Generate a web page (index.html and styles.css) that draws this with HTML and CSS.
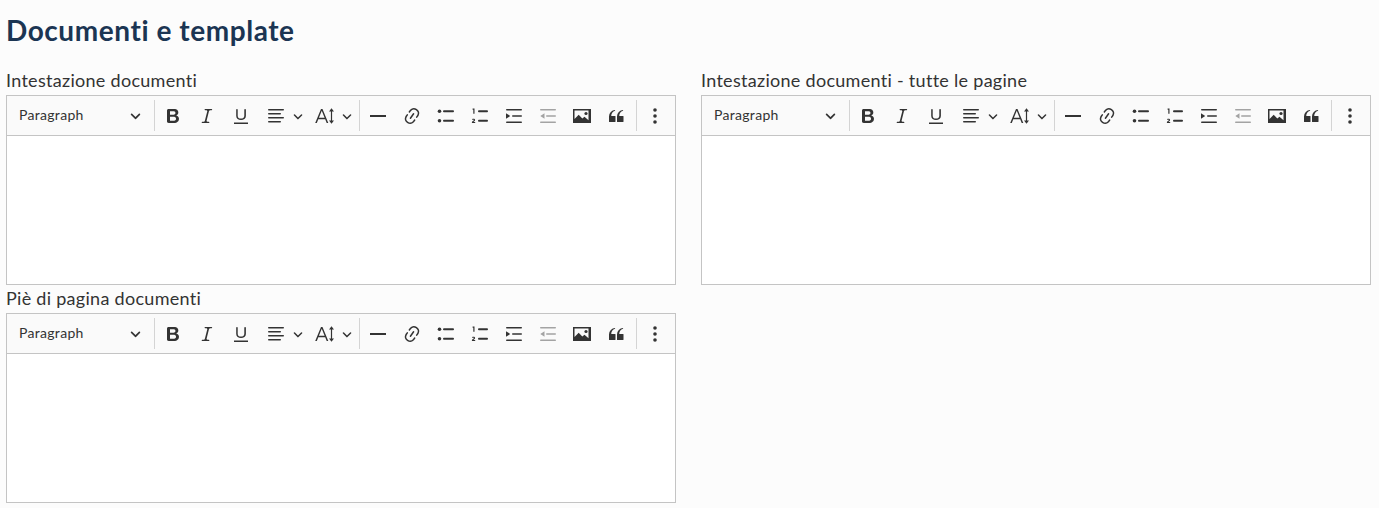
FILE: index.html
```html
<!DOCTYPE html>
<html lang="it">
<head>
<meta charset="utf-8">
<title>Documenti e template</title>
<link rel="stylesheet" href="styles.css">
</head>
<body>
<svg class="defs" width="0" height="0" aria-hidden="true">
  <symbol id="i-chev" viewBox="0 0 10 10"><path d="M.941 4.523a.75.75 0 1 1 1.06-1.06l3.006 3.005 3.005-3.005a.75.75 0 1 1 1.06 1.06l-3.549 3.55a.75.75 0 0 1-1.168-.136L.941 4.523z"/></symbol>
  <symbol id="i-bold" viewBox="0 0 20 20"><path d="M10.187 17H5.773c-.637 0-1.092-.138-1.364-.415-.273-.277-.409-.718-.409-1.323V4.738c0-.617.14-1.062.419-1.332.279-.27.73-.406 1.354-.406h4.68c.69 0 1.288.041 1.793.124.506.083.96.242 1.36.478.341.197.644.447.906.75a3.262 3.262 0 0 1 .808 2.162c0 1.401-.722 2.426-2.167 3.075C15.05 10.175 16 11.315 16 13.01a3.756 3.756 0 0 1-2.296 3.504 6.1 6.1 0 0 1-1.517.377c-.571.073-1.238.11-2 .11zm-.217-6.217H7v4.087h3.069c1.977 0 2.965-.69 2.965-2.072 0-.707-.256-1.22-.768-1.537-.512-.319-1.277-.478-2.296-.478zM7 5.13v3.619h2.606c.729 0 1.292-.067 1.69-.2a1.6 1.6 0 0 0 .91-.765c.165-.267.247-.566.247-.897 0-.707-.26-1.176-.778-1.409-.519-.232-1.31-.348-2.375-.348H7z"/></symbol>
  <symbol id="i-italic" viewBox="0 0 20 20"><path d="m9.586 14.633.021.004c-.036.335.095.655.393.962.082.083.173.15.274.201h1.474a.6.6 0 1 1 0 1.2H5.304a.6.6 0 0 1 0-1.2h1.15c.474-.07.809-.182 1.005-.334.157-.122.291-.32.404-.597l2.416-9.55a1.053 1.053 0 0 0-.281-.823 1.12 1.12 0 0 0-.442-.296H8.15a.6.6 0 0 1 0-1.2h6.443a.6.6 0 1 1 0 1.2h-1.195c-.376.056-.65.155-.823.296-.215.175-.423.439-.623.79l-2.366 9.347z"/></symbol>
  <symbol id="i-under" viewBox="0 0 20 20"><path d="M3 18v-1.5h14V18zm2.2-8V3.6c0-.4.4-.6.8-.6.3 0 .7.2.7.6v6.2c0 2 1.3 2.8 3.2 2.8 1.9 0 3.4-.9 3.4-2.9V3.6c0-.3.4-.5.8-.5.3 0 .8.2.8.5V10c0 2.7-2.2 4-4.9 4-2.6 0-4.8-1.3-4.8-4z"/></symbol>
  <symbol id="i-align" viewBox="0 0 20 20"><path d="M2 3.75c0-.41.34-.75.75-.75h14.5a.75.75 0 1 1 0 1.5H2.75A.75.75 0 0 1 2 3.75zm0 4c0-.41.34-.75.75-.75h11.5a.75.75 0 1 1 0 1.5H2.75A.75.75 0 0 1 2 7.75zm0 4c0-.41.34-.75.75-.75h14.5a.75.75 0 1 1 0 1.5H2.75a.75.75 0 0 1-.75-.75zm0 4c0-.41.34-.75.75-.75h11.5a.75.75 0 1 1 0 1.5H2.75a.75.75 0 0 1-.75-.75z"/></symbol>
  <symbol id="i-size" viewBox="0 0 22 22"><path d="M1.2 18 7 4h1.500l5.800 14h-1.600l-1.500-3.800H4.300L2.800 18zm3.700-5.200h5.700L7.750 5.800z"/><path d="M17.500 3.200 20 6.400h-1.900v9.200H20l-2.500 3.200-2.500-3.200h1.900V6.400H15z"/></symbol>
  <symbol id="i-hr" viewBox="0 0 20 20"><path d="M2 9h16v2H2z"/></symbol>
  <symbol id="i-link" viewBox="0 0 20 20"><path d="m11.077 15 .991-1.416a.75.75 0 1 1 1.229.86l-1.148 1.64a.748.748 0 0 1-.217.206 5.251 5.251 0 0 1-8.503-5.955.741.741 0 0 1 .12-.274l1.147-1.639a.75.75 0 1 1 1.228.86L4.933 10.7l.006.003a3.75 3.75 0 0 0 6.132 4.294l.006.004zm5.494-5.335a.748.748 0 0 1-.12.274l-1.147 1.639a.75.75 0 1 1-1.228-.86l.86-1.23a3.75 3.75 0 0 0-6.144-4.301l-.86 1.229a.75.75 0 0 1-1.229-.86l1.148-1.64a.748.748 0 0 1 .217-.206 5.251 5.251 0 0 1 8.503 5.955zm-4.563-2.532a.75.75 0 0 1 .184 1.045l-3.155 4.505a.75.75 0 1 1-1.229-.86l3.155-4.506a.75.75 0 0 1 1.045-.184z"/></symbol>
  <symbol id="i-ul" viewBox="0 0 20 20"><path d="M7 5.250c0-.48.4-.9.9-.9h9.200a.9.9 0 1 1 0 1.800H7.900A.9.9 0 0 1 7 5.250zm0 9.500c0-.48.4-.9.9-.9h9.200a.9.9 0 1 1 0 1.800H7.900a.9.9 0 0 1-.9-.9z"/><circle cx="3.500" cy="5.250" r="1.800"/><circle cx="3.500" cy="14.750" r="1.800"/></symbol>
  <symbol id="i-ol" viewBox="0 0 20 20"><path d="M8 5.250c0-.48.4-.9.9-.9h8.200a.9.9 0 1 1 0 1.800H8.900A.9.9 0 0 1 8 5.250zm0 9.500c0-.48.4-.9.9-.9h8.200a.9.9 0 1 1 0 1.800H8.900a.9.9 0 0 1-.9-.9z"/><path d="M2.600 2.600h1.900v5.200H3.300V3.700h-.7zM1.900 16.300c0-.9 2-1.500 2-2.200 0-.3-.3-.4-.6-.4-.3 0-.7.1-1.100.4v-1.100c.4-.2.8-.3 1.300-.3.9 0 1.600.5 1.600 1.300 0 1.100-1.400 1.600-1.800 2.100h1.900v1H1.900z"/></symbol>
  <symbol id="i-indent" viewBox="0 0 20 20"><path d="M2 3.750c0-.41.34-.75.75-.75h14.500a.75.75 0 1 1 0 1.500H2.750A.75.75 0 0 1 2 3.750zm6 6.250c0-.41.34-.75.75-.75h8.500a.75.75 0 1 1 0 1.500h-8.500A.75.75 0 0 1 8 10zm-6 6.250c0-.41.34-.75.75-.75h14.500a.75.75 0 1 1 0 1.500H2.750a.75.75 0 0 1-.75-.75z"/><path d="M2 7.300 6.200 10 2 12.700z"/></symbol>
  <symbol id="i-outdent" viewBox="0 0 20 20"><path d="M2 3.750c0-.41.34-.75.75-.75h14.500a.75.75 0 1 1 0 1.500H2.750A.75.75 0 0 1 2 3.750zm6 6.250c0-.41.34-.75.75-.75h8.500a.75.75 0 1 1 0 1.500h-8.500A.75.75 0 0 1 8 10zm-6 6.250c0-.41.34-.75.75-.75h14.500a.75.75 0 1 1 0 1.500H2.750a.75.75 0 0 1-.75-.75z"/><path d="M6.500 7.300 2.300 10l4.200 2.700z"/></symbol>
  <symbol id="i-image" viewBox="0 0 20 20"><path d="M1.200 3h17.600c.1 0 .2.1.2.2v13.600c0 .1-.1.2-.2.2H1.200a.2.2 0 0 1-.2-.2V3.200c0-.1.1-.2.2-.2zm1.300 1.500v8.600l4.200-4.400 3.600 3.800 2.200-1.800 4 3.600V4.500z"/><circle cx="14" cy="7.500" r="1.600"/></symbol>
  <symbol id="i-quote" viewBox="0 0 20 20"><path d="M3 10.423a6.500 6.500 0 0 1 6.056-6.408l.038.67C6.448 5.423 5.354 7.663 5.220 10H9c.552 0 .5.432.5.986v4.511c0 .554-.448.503-1 .503h-5c-.552 0-.5-.449-.5-1.003v-4.574zm8 0a6.500 6.500 0 0 1 6.056-6.408l.038.67c-2.646.739-3.740 2.979-3.873 5.315H17c.552 0 .5.432.5.986v4.511c0 .554-.448.503-1 .503h-5c-.552 0-.5-.449-.5-1.003v-4.574z"/></symbol>
  <symbol id="i-dots" viewBox="0 0 20 20"><circle cx="10" cy="4" r="1.800"/><circle cx="10" cy="10" r="1.800"/><circle cx="10" cy="16" r="1.800"/></symbol>
</svg>

<main class="page">
  <h1 class="title">Documenti e template</h1>
  <div class="grid">

    <section class="field">
      <div class="label">Intestazione documenti</div>
      <div class="editor">
        <div class="toolbar">
          <div class="select"><span>Paragraph</span><svg class="chev"><use href="#i-chev"/></svg></div>
          <span class="sep"></span>
          <span class="btn"><svg class="ico"><use href="#i-bold"/></svg></span>
          <span class="btn"><svg class="ico"><use href="#i-italic"/></svg></span>
          <span class="btn"><svg class="ico"><use href="#i-under"/></svg></span>
          <span class="btn drop"><svg class="ico"><use href="#i-align"/></svg><svg class="chev"><use href="#i-chev"/></svg></span>
          <span class="btn drop wide"><svg class="ico big"><use href="#i-size"/></svg><svg class="chev"><use href="#i-chev"/></svg></span>
          <span class="sep"></span>
          <span class="btn"><svg class="ico"><use href="#i-hr"/></svg></span>
          <span class="btn"><svg class="ico"><use href="#i-link"/></svg></span>
          <span class="btn"><svg class="ico"><use href="#i-ul"/></svg></span>
          <span class="btn"><svg class="ico"><use href="#i-ol"/></svg></span>
          <span class="btn"><svg class="ico"><use href="#i-indent"/></svg></span>
          <span class="btn off"><svg class="ico"><use href="#i-outdent"/></svg></span>
          <span class="btn"><svg class="ico"><use href="#i-image"/></svg></span>
          <span class="btn"><svg class="ico"><use href="#i-quote"/></svg></span>
          <span class="sep"></span>
          <span class="btn"><svg class="ico"><use href="#i-dots"/></svg></span>
        </div>
        <div class="content"></div>
      </div>
    </section>

    <section class="field">
      <div class="label">Intestazione documenti - tutte le pagine</div>
      <div class="editor">
        <div class="toolbar">
          <div class="select"><span>Paragraph</span><svg class="chev"><use href="#i-chev"/></svg></div>
          <span class="sep"></span>
          <span class="btn"><svg class="ico"><use href="#i-bold"/></svg></span>
          <span class="btn"><svg class="ico"><use href="#i-italic"/></svg></span>
          <span class="btn"><svg class="ico"><use href="#i-under"/></svg></span>
          <span class="btn drop"><svg class="ico"><use href="#i-align"/></svg><svg class="chev"><use href="#i-chev"/></svg></span>
          <span class="btn drop wide"><svg class="ico big"><use href="#i-size"/></svg><svg class="chev"><use href="#i-chev"/></svg></span>
          <span class="sep"></span>
          <span class="btn"><svg class="ico"><use href="#i-hr"/></svg></span>
          <span class="btn"><svg class="ico"><use href="#i-link"/></svg></span>
          <span class="btn"><svg class="ico"><use href="#i-ul"/></svg></span>
          <span class="btn"><svg class="ico"><use href="#i-ol"/></svg></span>
          <span class="btn"><svg class="ico"><use href="#i-indent"/></svg></span>
          <span class="btn off"><svg class="ico"><use href="#i-outdent"/></svg></span>
          <span class="btn"><svg class="ico"><use href="#i-image"/></svg></span>
          <span class="btn"><svg class="ico"><use href="#i-quote"/></svg></span>
          <span class="sep"></span>
          <span class="btn"><svg class="ico"><use href="#i-dots"/></svg></span>
        </div>
        <div class="content"></div>
      </div>
    </section>

    <section class="field">
      <div class="label">Piè di pagina documenti</div>
      <div class="editor">
        <div class="toolbar">
          <div class="select"><span>Paragraph</span><svg class="chev"><use href="#i-chev"/></svg></div>
          <span class="sep"></span>
          <span class="btn"><svg class="ico"><use href="#i-bold"/></svg></span>
          <span class="btn"><svg class="ico"><use href="#i-italic"/></svg></span>
          <span class="btn"><svg class="ico"><use href="#i-under"/></svg></span>
          <span class="btn drop"><svg class="ico"><use href="#i-align"/></svg><svg class="chev"><use href="#i-chev"/></svg></span>
          <span class="btn drop wide"><svg class="ico big"><use href="#i-size"/></svg><svg class="chev"><use href="#i-chev"/></svg></span>
          <span class="sep"></span>
          <span class="btn"><svg class="ico"><use href="#i-hr"/></svg></span>
          <span class="btn"><svg class="ico"><use href="#i-link"/></svg></span>
          <span class="btn"><svg class="ico"><use href="#i-ul"/></svg></span>
          <span class="btn"><svg class="ico"><use href="#i-ol"/></svg></span>
          <span class="btn"><svg class="ico"><use href="#i-indent"/></svg></span>
          <span class="btn off"><svg class="ico"><use href="#i-outdent"/></svg></span>
          <span class="btn"><svg class="ico"><use href="#i-image"/></svg></span>
          <span class="btn"><svg class="ico"><use href="#i-quote"/></svg></span>
          <span class="sep"></span>
          <span class="btn"><svg class="ico"><use href="#i-dots"/></svg></span>
        </div>
        <div class="content"></div>
      </div>
    </section>

  </div>
</main>
</body>
</html>
```

FILE: styles.css
```css
* { box-sizing: border-box; }
html, body { margin: 0; height: 100%; overflow: hidden; }
body {
  background: #fcfcfc;
  color: #333;
  font-family: "Lato", "Open Sans", sans-serif;
}
.defs { position: absolute; }
.page { padding: 0 8px 0 6px; }
.title {
  margin: 0;
  padding-top: 12px;
  height: 70px;
  font-size: 28px;
  line-height: 36px;
  font-weight: 700;
  letter-spacing: 0.56px;
  color: #1b3553;
}
.grid {
  display: grid;
  grid-template-columns: 670px 670px;
  column-gap: 25px;
  row-gap: 3px;
}
.label {
  height: 25px;
  font-size: 18px;
  line-height: 20px;
  letter-spacing: 0.29px;
  color: #333;
}
.editor {
  border: 1px solid #c4c4c4;
  background: #fff;
  height: 190px;
  display: flex;
  flex-direction: column;
}
.toolbar {
  flex: none;
  height: 40px;
  display: flex;
  align-items: center;
  background: #fafafa;
  border-bottom: 1px solid #c4c4c4;
  color: #333;
}
.content { flex: 1; }
.select {
  width: 142px;
  padding: 0 8px 0 12px;
  margin-right: 5px;
  display: flex;
  align-items: center;
  justify-content: space-between;
  font-size: 14px;
  line-height: 16px;
  letter-spacing: 0.3px;
}
.select span { margin-top: -2px; }
.sep {
  flex: none;
  width: 1px;
  height: 31px;
  background: #d4d4d4;
}
.btn {
  flex: none;
  width: 34px;
  height: 34px;
  display: flex;
  align-items: center;
  justify-content: center;
}
.btn.drop {
  width: 48px;
  justify-content: flex-start;
  padding-left: 8px;
  gap: 7px;
}
.btn.wide { width: 50px; gap: 6px; }
.sep + .btn { margin-left: 1px; }
.btn + .sep { margin-left: 3px; }
.ico { width: 20px; height: 20px; fill: currentColor; display: block; }
.ico.big { width: 22px; height: 22px; }
.btn.off { color: #a3a3a3; }
.chev { width: 10px; height: 10px; fill: currentColor; display: block; }
.select .chev { width: 11px; height: 11px; }
```
